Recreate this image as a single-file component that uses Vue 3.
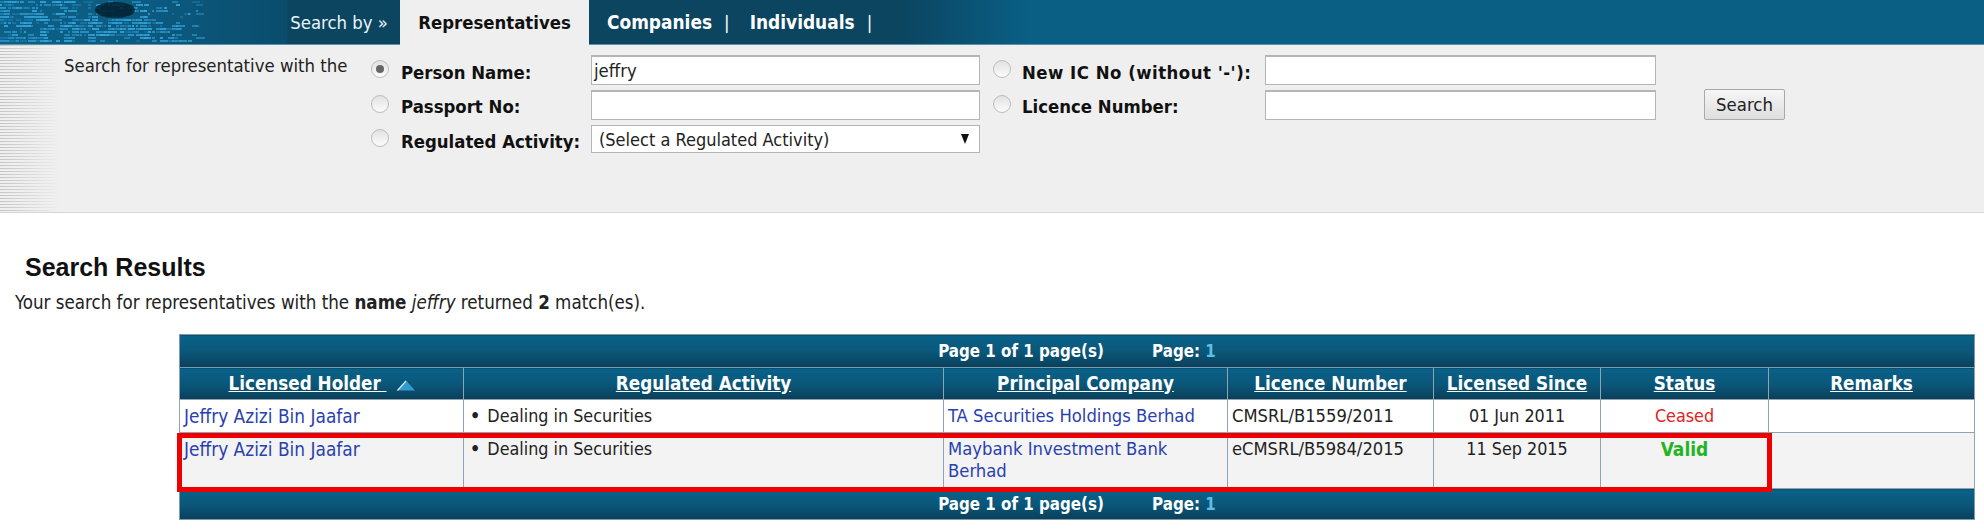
<script setup>
const rows = [
  {
    holder: 'Jeffry Azizi Bin Jaafar',
    activity: 'Dealing in Securities',
    company: 'TA Securities Holdings Berhad',
    licence: 'CMSRL/B1559/2011',
    since: '01 Jun 2011',
    status: 'Ceased',
  },
  {
    holder: 'Jeffry Azizi Bin Jaafar',
    activity: 'Dealing in Securities',
    company: 'Maybank Investment Bank Berhad',
    licence: 'eCMSRL/B5984/2015',
    since: '11 Sep 2015',
    status: 'Valid',
  },
]

// speckle for the banner picture, seeded so it stays the same on every load
let seed = 7
const rnd = () => {
  seed = (seed * 16807) % 2147483647
  return seed / 2147483647
}
const specks = []
for (let y = 1; y < 42; y += 3) {
  for (let x = 0; x < 200; x += 4) {
    const lit = y > 18 && y < 36 && x > 60 && x < 150 ? 0.8 : x < 70 ? 0.6 : 0.3
    if (rnd() < lit) {
      specks.push({
        x,
        y,
        w: 2 + Math.floor(rnd() * 8),
        o: (0.2 + rnd() * 0.7).toFixed(2),
      })
    }
  }
}
</script>

<template>
  <div class="page">
    <!-- Top bar -->
    <div class="topbar">
      <div class="banner">
        <svg class="speckle" width="288" height="45" viewBox="0 0 288 45">
          <rect v-for="(s, i) in specks" :key="i" :x="s.x" :y="s.y" :width="s.w" height="2" fill="#35a6dc" :opacity="s.o" />
          <ellipse cx="115" cy="10" rx="20" ry="8" fill="#02202f" opacity="0.85" />
        </svg>
        <span class="search-by">Search by »</span>
      </div>
      <span class="tab">Representatives</span>
      <span class="link">Companies</span><span class="pipe">|</span>
      <span class="link">Individuals</span><span class="pipe">|</span>
    </div>

    <!-- Search form -->
    <div class="panel">
      <div class="intro">Search for representative with the</div>
      <div class="form">
        <span class="radio checked"></span>
        <label>Person Name:</label>
        <div class="input">jeffry</div>
        <span class="radio second"></span>
        <label class="wide">New IC No (without '-'):</label>
        <div class="input"></div>
        <span></span>

        <span class="radio"></span>
        <label>Passport No:</label>
        <div class="input"></div>
        <span class="radio second"></span>
        <label>Licence Number:</label>
        <div class="input"></div>
        <div class="btn">Search</div>

        <span class="radio"></span>
        <label>Regulated Activity:</label>
        <div class="input select">
          <span>(Select a Regulated Activity)</span>
          <span class="caret"></span>
        </div>
      </div>
    </div>

    <!-- Results -->
    <h2 class="title">Search Results</h2>
    <p class="summary">
      Your search for representatives with the <b>name</b> <i>jeffry</i> returned <b>2</b> match(es).
    </p>

    <div class="results">
      <table>
        <colgroup>
          <col class="c1" />
          <col class="c2" />
          <col class="c3" />
          <col class="c4" />
          <col class="c5" />
          <col class="c6" />
          <col class="c7" />
        </colgroup>
        <thead>
          <tr class="pager">
            <td colspan="7">Page 1 of 1 page(s) <span class="page-lbl">Page:</span> <span class="page-num">1</span></td>
          </tr>
          <tr class="head">
            <th>
              <u>Licensed Holder </u>
              <svg class="sort" width="18" height="11" viewBox="0 0 18 11">
                <path d="M0 10.5 L9 0.5 L18 10.5 Z" fill="#2f9bd0" />
                <path d="M0.5 10.5 L9 1" stroke="#d8edf6" stroke-width="1.2" fill="none" />
              </svg>
            </th>
            <th><u>Regulated Activity</u></th>
            <th><u>Principal Company</u></th>
            <th><u>Licence Number</u></th>
            <th><u>Licensed Since</u></th>
            <th><u>Status</u></th>
            <th><u>Remarks</u></th>
          </tr>
        </thead>
        <tbody>
          <tr v-for="(r, i) in rows" :key="i" :class="{ alt: i === 1 }">
            <td class="blue holder">{{ r.holder }}</td>
            <td><span class="bullet">•</span> {{ r.activity }}</td>
            <td class="blue">{{ r.company }}</td>
            <td class="licence">{{ r.licence }}</td>
            <td class="center">{{ r.since }}</td>
            <td class="center" :class="r.status.toLowerCase()">{{ r.status }}</td>
            <td></td>
          </tr>
        </tbody>
        <tfoot>
          <tr class="pager bottom">
            <td colspan="7">Page 1 of 1 page(s) <span class="page-lbl">Page:</span> <span class="page-num">1</span></td>
          </tr>
        </tfoot>
      </table>
      <div class="highlight"></div>
    </div>
  </div>
</template>

<style>
html,
body {
  margin: 0;
  background: #fff;
}
</style>

<style scoped>
.page {
  width: 1984px;
  height: 529px;
  overflow: hidden;
  font-family: "DejaVu Sans Condensed", "DejaVu Sans", sans-serif;
  font-size: 18.4px;
  color: #222;
}

/* Top bar */
.topbar {
  height: 45px;
  display: flex;
  align-items: center;
  color: #fff;
  font-weight: 700;
  background: linear-gradient(90deg, #0b4560 0, #0b4560 900px, #0a5f85 1030px, #0a5f85 100%);
  border-bottom: 1px solid #5b93a8;
  box-sizing: border-box;
}

.banner {
  position: relative;
  width: 400px;
  height: 100%;
  display: flex;
  align-items: center;
  justify-content: flex-end;
  box-sizing: border-box;
  padding-right: 12px;
  background:
    linear-gradient(90deg, #0c6088 0, #0c5a80 150px, #0a4d6d 287px, #0b4560 288px);
}

.speckle {
  position: absolute;
  left: 0;
  top: 0;
}

.search-by {
  font-weight: 400;
  color: #eaf4f8;
}

.tab {
  width: 189px;
  height: 46px;
  margin-bottom: -1px;
  display: flex;
  align-items: center;
  justify-content: center;
  background: #efefef;
  color: #111;
}

.link {
  margin-left: 18px;
  font-size: 18.9px;
}

.pipe {
  margin-left: 12px;
  font-weight: 400;
}

.pipe + .link {
  margin-left: 20px;
}

/* Search form */
.panel {
  height: 168px;
  box-sizing: border-box;
  display: flex;
  padding: 10px 0 0 64px;
  background:
    linear-gradient(90deg, rgba(239, 239, 239, 0), #efefef 60px),
    repeating-linear-gradient(180deg, #c4c4c4 0 1px, #efefef 1px 3px);
  background-color: #efefef;
  border-bottom: 1px solid #d6d6d6;
}

.intro {
  width: 307px;
  line-height: 22px;
  flex: none;
}

.form {
  display: grid;
  grid-template-columns: 30px 190px 389px 42px 243px 391px auto;
  grid-auto-rows: 30px;
  row-gap: 4.5px;
  align-items: center;
  align-content: start;
}

.form label {
  font-weight: 700;
  color: #111;
  padding-top: 4px;
}

.form label.wide {
  letter-spacing: 0.5px;
  white-space: nowrap;
}

.radio {
  width: 18px;
  height: 18px;
  border-radius: 50%;
  box-sizing: border-box;
  border: 1px solid #bdbdbd;
  background: linear-gradient(180deg, #e2e2e2, #fbfbfb);
  position: relative;
  margin-top: -2px;
}

.radio.second {
  margin-left: 13px;
  margin-top: -2px;
}

.radio.checked::after {
  content: "";
  position: absolute;
  left: 4px;
  top: 4px;
  width: 8px;
  height: 8px;
  border-radius: 50%;
  background: #666;
}

.input {
  height: 30px;
  box-sizing: border-box;
  background: #fff;
  border: 1px solid #b5b5b5;
  border-top-width: 2px;
  padding: 0 2px;
  line-height: 27px;
}

.select {
  height: 28px;
  display: flex;
  justify-content: space-between;
  align-items: center;
  padding: 0 10px 0 7px;
  border-top-width: 1px;
  font-size: 18px;
}

.caret {
  width: 0;
  height: 0;
  border-left: 4px solid transparent;
  border-right: 4px solid transparent;
  border-top: 10px solid #111;
}

.btn {
  margin-left: 48px;
  width: 81px;
  height: 31px;
  box-sizing: border-box;
  display: flex;
  align-items: center;
  justify-content: center;
  border: 1px solid #a9a9a9;
  border-radius: 2px;
  background: linear-gradient(180deg, #f6f6f6, #dedede);
}

/* Results */
.title {
  margin: 41px 0 0 25px;
  font: 700 25px/26px "Liberation Sans", Arial, sans-serif;
  color: #111;
}

.summary {
  margin: 11px 0 0 15px;
  line-height: 24px;
  font-size: 18.6px;
}

.results {
  position: relative;
  margin: 19px 0 0 179px;
  width: 1795px;
}

table {
  width: 1795px;
  table-layout: fixed;
  border-collapse: collapse;
}

.c1,
.c3 {
  width: 284px;
}

.c2 {
  width: 480px;
}

.c4,
.c7 {
  width: 206px;
}

.c5 {
  width: 167px;
}

.c6 {
  width: 168px;
}

td,
th {
  border: 1px solid #8fa3b3;
  padding: 5px 4px;
  vertical-align: top;
  line-height: 22px;
}

.pager td {
  height: 33px;
  box-sizing: border-box;
  padding: 0 4px;
  vertical-align: middle;
  text-align: center;
  color: #fff;
  font-weight: 700;
  font-size: 16.8px;
  background: linear-gradient(180deg, #0a6289, #0a5779 50%, #0a3f5a);
  border-color: #7c9bac;
}

.pager.bottom td {
  height: 31px;
}

.page-lbl {
  margin-left: 43px;
}

.page-num {
  color: #5bc0e8;
}

.head th {
  height: 32px;
  box-sizing: border-box;
  padding: 0 4px;
  color: #fff;
  text-align: center;
  vertical-align: middle;
  font-weight: 700;
  font-size: 18.7px;
  background: linear-gradient(180deg, #0a6289, #0a5779 50%, #0a3f5a);
}

.sort {
  margin-left: 10px;
  vertical-align: -1px;
}

tbody tr {
  background: #fff;
}

tbody tr.alt {
  background: #f3f3f3;
}

tbody tr.alt td {
  height: 56px;
  box-sizing: border-box;
}

tbody td {
  height: 33px;
  box-sizing: border-box;
  font-size: 17.8px;
}

td.blue {
  color: #2a3fb0;
  font-size: 18.3px;
}

td.holder {
  font-size: 18.9px;
}

td.licence {
  font-size: 18.2px;
}

.center {
  text-align: center;
}

.ceased {
  color: #e52222;
}

td.valid {
  color: #22b422;
  font-weight: 700;
  font-size: 19px;
}

.bullet {
  margin: 0 2px;
  font-weight: 700;
}

/* Red annotation box around the second row */
.highlight {
  position: absolute;
  left: -2px;
  top: 99px;
  width: 1595px;
  height: 59px;
  box-sizing: border-box;
  border: 5px solid #ee0000;
  pointer-events: none;
}
</style>
